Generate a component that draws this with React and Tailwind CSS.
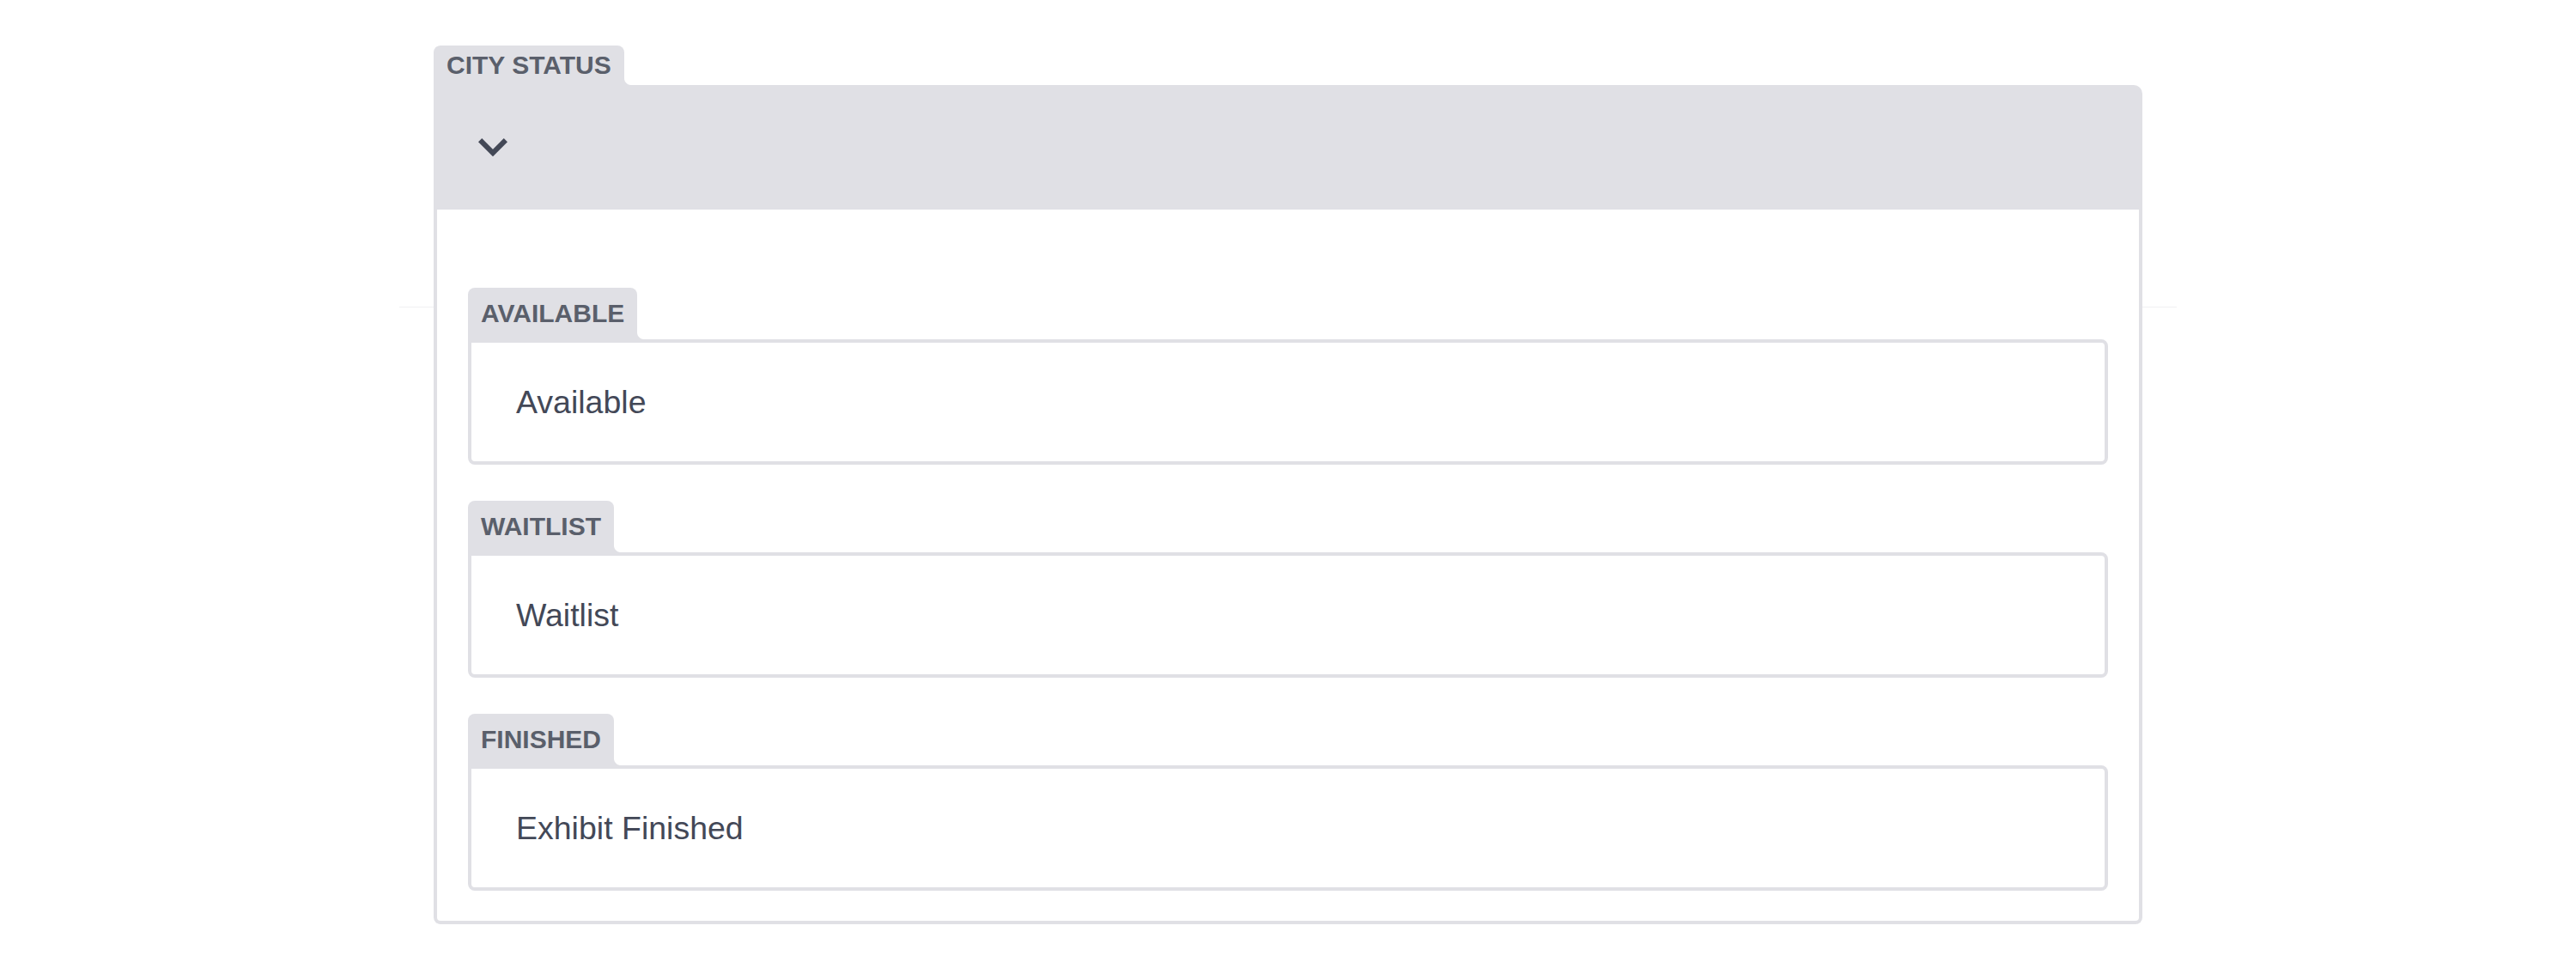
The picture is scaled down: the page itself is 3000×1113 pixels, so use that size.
const statuses = [
  { key: 'available', label: 'Available', value: 'Available' },
  { key: 'waitlist', label: 'Waitlist', value: 'Waitlist' },
  { key: 'finished', label: 'Finished', value: 'Exhibit Finished' },
]

// small concave corner that joins a tab to the bar / border under it
function Fillet() {
  return (
    <span className="absolute left-full bottom-0 w-2 h-2 bg-[radial-gradient(circle_at_100%_0,transparent_7.5px,#e0e0e5_8.5px)]" />
  )
}

function Tab({ children, className = '' }) {
  return (
    <div className="flex">
      <div
        className={`relative flex items-center rounded-t-[8px] bg-[#e0e0e5] px-[15px] text-[30px] font-bold uppercase leading-none text-[#5a5f6b] ${className}`}
      >
        {children}
        <Fillet />
      </div>
    </div>
  )
}

function Chevron() {
  return (
    <svg width="34" height="21" viewBox="0 0 34 21" fill="none">
      <polyline
        points="2.12,2.12 17,17 31.88,2.12"
        stroke="#434856"
        strokeWidth="6"
        strokeLinejoin="miter"
        strokeLinecap="butt"
      />
    </svg>
  )
}

function StatusField({ label, value }) {
  return (
    <div>
      <Tab className="h-[60px]">{label}</Tab>
      <div className="flex h-[146px] items-center rounded-b-[8px] rounded-tr-[8px] border-4 border-[#e0e0e5] bg-white px-[52px] text-[37.5px] text-[#434857]">
        {value}
      </div>
    </div>
  )
}

export default function App() {
  return (
    <div className="relative min-h-screen bg-white pt-[53px] font-['Liberation_Sans',Arial,sans-serif]">
      {/* faint page divider behind the card */}
      <div className="absolute left-[465px] right-[465px] top-[357px] h-px bg-[#f1f1f3]" />

      <div className="relative mx-auto w-[1990px]">
        <Tab className="h-[46px]">City Status</Tab>

        {/* header bar */}
        <div className="flex h-[145px] items-center rounded-tr-[10px] bg-[#e0e0e5] pl-[52px]">
          <Chevron />
        </div>

        {/* body */}
        <div className="flex flex-col gap-[42px] rounded-b-[8px] border-x-4 border-b-4 border-[#e0e0e5] bg-white px-[36px] pt-[91px] pb-[35px]">
          {statuses.map((s) => (
            <StatusField key={s.key} label={s.label} value={s.value} />
          ))}
        </div>
      </div>
    </div>
  )
}
